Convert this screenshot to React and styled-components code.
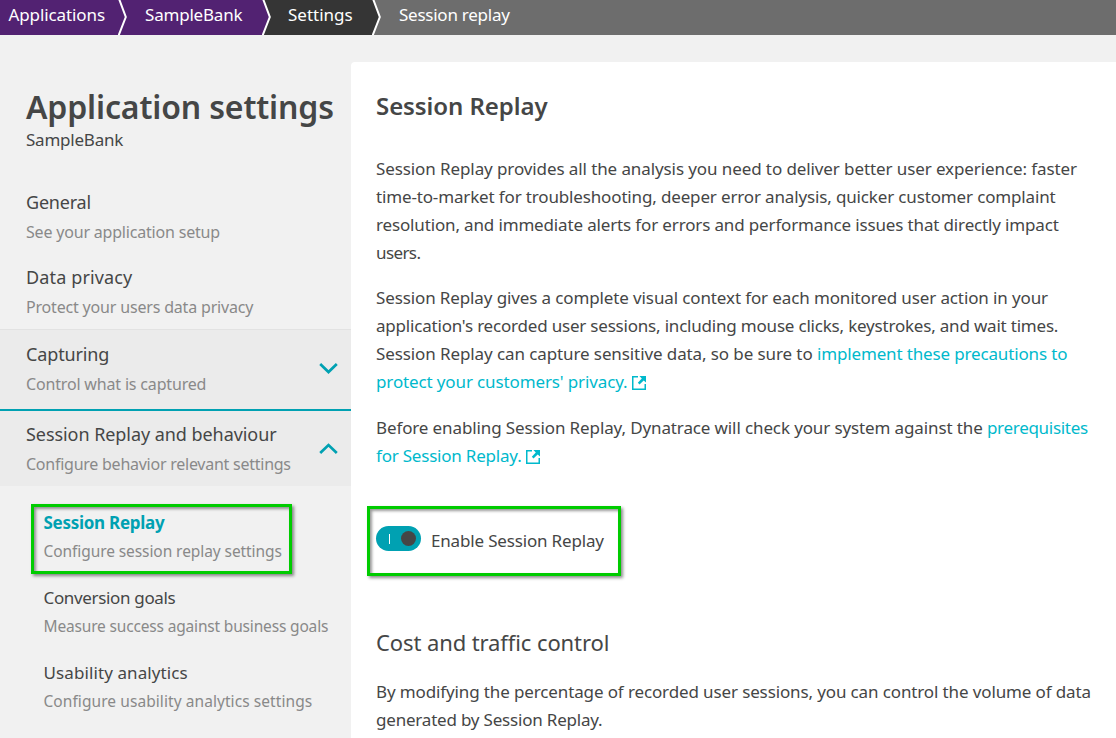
import React from "react";
import styled, { createGlobalStyle } from "styled-components";

const Global = createGlobalStyle`
  *, *::before, *::after { box-sizing: border-box; }
  body { margin: 0; background: #f1f1f1; color: #454646; font: 17px/28px "Noto Sans", sans-serif; overflow: hidden; }
  h1, h2, h3, p { margin: 0; }
`;
const Page = styled.div`height: 738px; display: flex; flex-direction: column; overflow: hidden;`;
const Breadcrumbs = styled.nav`height: 35px; display: flex; flex: none; background: #6d6d6d;`;
const Crumb = styled.span`
  width: ${p => p.$w}px; flex: none; padding-left: ${p => p.$pad}px; color: #fff; background: ${p => p.$bg};
  line-height: 30px; letter-spacing: ${p => p.$track}px; white-space: nowrap;
`;
const Arrow = styled.svg`flex: none; width: 12px; height: 35px; display: block;`;
const Body = styled.div`display: flex; flex: 1; min-height: 0;`;
const Sidebar = styled.aside`width: 351px; flex: none; padding-top: 52px;`;
const Title = styled.h1`padding-left: 26px; font-size: 32px; line-height: 40px; font-weight: 600; letter-spacing: ${p => p.$track}px; white-space: nowrap;`;
const Sub = styled.div`padding-left: 26px; line-height: 26px; letter-spacing: ${p => p.$track}px;`;
const Nav = styled.nav`padding-top: 35px;`;
const Item = styled.div`
  height: ${p => p.$h || 75}px; padding: ${p => p.$top || 0}px 0 0 26px; position: relative;
  background: ${p => p.$open ? "#ebebeb" : "transparent"}; border-top: ${p => p.$line || "0"};
`;
const Name = styled.div`font-size: 18px; line-height: 29px; white-space: nowrap; letter-spacing: ${p => p.$track}px;`;
const Hint = styled.div`font-size: 16px; line-height: 30px; color: #898989; white-space: nowrap; letter-spacing: ${p => p.$track}px;`;
const SubItem = styled.div`height: 75px; padding-left: 43.5px;`;
const SubName = styled(Name)`
  font-size: 17px; line-height: 30px;
  font-weight: ${p => p.$active ? 700 : 400}; color: ${p => p.$active ? "#00a1b2" : "#454646"};
`;
const SubHint = styled(Hint)`font-size: 15.5px; margin-top: -2px;`;
const Chevron = styled.svg`position: absolute; right: 13px; top: ${p => p.$y}px; width: 19px; height: 12px;`;
const SubNav = styled.div`padding-top: 22px; position: relative;`;
const Highlight = styled.div`
  position: absolute; left: ${p => p.$x}px; top: ${p => p.$y}px; width: ${p => p.$w}px; height: 70px;
  border: 3px solid #00cc00; box-shadow: 2px 2px 3px rgba(0,0,0,.45), inset 2px 2px 3px rgba(0,0,0,.4);
`;
const Panel = styled.main`flex: 1; margin-top: 27px; padding: 26px 0 0 25px; background: #fff; border-top-left-radius: 4px; min-width: 0;`;
const Heading = styled.h2`font-size: 24px; line-height: 36px; font-weight: 600; letter-spacing: -0.07px;`;
const SubHeading = styled.h3`font-size: 22px; line-height: 32px; font-weight: 400; margin-top: 72px; letter-spacing: -0.1px;`;
const Paragraph = styled.p`margin-top: ${p => p.$mt}px;`;
const Line = styled.span`display: block; height: 28px; white-space: nowrap; letter-spacing: ${p => p.$track}px;`;
const Link = styled.a`color: #00b9cc; letter-spacing: ${p => p.$track}px;`;
const External = styled.svg`width: 14px; height: 14px; margin-left: 5px; vertical-align: -2px;`;
const ToggleRow = styled.div`position: relative; display: flex; align-items: center; margin-top: 54px; height: 30px;`;
const Switch = styled.span`
  width: 45px; height: 25px; border-radius: 13px; background: #00a1b2; display: flex; align-items: center; justify-content: space-between;
  padding: 0 5px 0 13px; margin: -1px 10px 0 0;
  &::before { content: ""; width: 1px; height: 10px; background: #fff; }
  &::after { content: ""; width: 15px; height: 15px; border-radius: 50%; background: #454646; }
`;
const Label = styled.span`letter-spacing: -0.17px; line-height: 30px; margin-top: 4px;`;

const Separator = ({ left, right }) => (
  <Arrow viewBox="0 0 12 35">
    <rect width="12" height="35" fill={right} />
    <path d="M0 0H1.5L7.8 17L0.8 35H0Z" fill={left} />
    <path d="M1.1 -1L7.8 17L0.4 36" fill="none" stroke="#fff" strokeWidth="2" />
  </Arrow>
);
const Chev = ({ up, y }) => (
  <Chevron $y={y} viewBox="0 0 19 12">
    <path d={up ? "M1.2 10L9.5 2L17.8 10" : "M1.2 2L9.5 10L17.8 2"} fill="none" stroke="#00a1b2" strokeWidth="2.7" />
  </Chevron>
);
const ExternalIcon = () => (
  <External viewBox="0 0 14 14">
    <path d="M6 0.75H0.75V13.25H13.25V8" fill="none" stroke="#00b9cc" strokeWidth="1.5" />
    <path d="M7.4 0H14V6.6L11.7 4.4L7.5 8.4L5.8 6.7L9.8 2.5Z" fill="#00b9cc" />
  </External>
);

export default function App() {
  return (
    <Page>
      <Global />
      <Breadcrumbs>
        <Crumb $w={118} $pad={8.5} $bg="#522272" $track={-0.1}>Applications</Crumb>
        <Separator left="#522272" right="#522272" />
        <Crumb $w={132} $pad={15} $bg="#522272" $track={-0.2}>SampleBank</Crumb>
        <Separator left="#522272" right="#353535" />
        <Crumb $w={98} $pad={14} $bg="#353535" $track={0}>Settings</Crumb>
        <Separator left="#353535" right="#6d6d6d" />
        <Crumb $w={732} $pad={15} $bg="#6d6d6d" $track={-0.25}>Session replay</Crumb>
      </Breadcrumbs>
      <Body>
        <Sidebar>
          <Title $track={-0.15}>Application settings</Title>
          <Sub $track={-0.22}>SampleBank</Sub>
          <Nav>
            <Item><Name $track={-0.2}>General</Name><Hint $track={-0.19}>See your application setup</Hint></Item>
            <Item $h={66}><Name $track={0.14}>Data privacy</Name><Hint $track={-0.18}>Protect your users data privacy</Hint></Item>
            <Item $h={80} $top={10} $open $line="1px solid #e2e2e2">
              <Name $track={-0.13}>Capturing</Name><Hint $track={-0.17}>Control what is captured</Hint><Chev y={32} />
            </Item>
            <Item $h={77} $top={9} $open $line="2px solid #00a1b2">
              <Name $track={-0.06}>Session Replay and behaviour</Name><Hint $track={-0.25}>Configure behavior relevant settings</Hint><Chev y={32} up />
            </Item>
          </Nav>
          <SubNav>
            <SubItem><SubName $active $track={-0.28}>Session Replay</SubName><SubHint $track={-0.08}>Configure session replay settings</SubHint></SubItem>
            <SubItem><SubName $track={-0.34}>Conversion goals</SubName><SubHint $track={-0.17}>Measure success against business goals</SubHint></SubItem>
            <SubItem><SubName $track={0.1}>Usability analytics</SubName><SubHint $track={0.07}>Configure usability analytics settings</SubHint></SubItem>
            <Highlight $x={31} $y={18} $w={261} />
          </SubNav>
        </Sidebar>
        <Panel>
          <Heading>Session Replay</Heading>
          <Paragraph $mt={31}>
            <Line $track={-0.097}>Session Replay provides all the analysis you need to deliver better user experience: faster</Line>
            <Line $track={-0.15}>time-to-market for troubleshooting, deeper error analysis, quicker customer complaint</Line>
            <Line $track={-0.15}>resolution, and immediate alerts for errors and performance issues that directly impact</Line>
            <Line $track={-0.6}>users.</Line>
          </Paragraph>
          <Paragraph $mt={17}>
            <Line $track={-0.12}>Session Replay gives a complete visual context for each monitored user action in your</Line>
            <Line $track={-0.2}>application's recorded user sessions, including mouse clicks, keystrokes, and wait times.</Line>
            <Line $track={-0.1}>Session Replay can capture sensitive data, so be sure to <Link $track={-0.15}>implement these precautions to</Link></Line>
            <Line><Link $track={-0.13}>protect your customers' privacy.<ExternalIcon /></Link></Line>
          </Paragraph>
          <Paragraph $mt={18}>
            <Line $track={-0.12}>Before enabling Session Replay, Dynatrace will check your system against the <Link $track={-0.3}>prerequisites</Link></Line>
            <Line><Link $track={-0.21}>for Session Replay.<ExternalIcon /></Link></Line>
          </Paragraph>
          <ToggleRow>
            <Switch /><Label>Enable Session Replay</Label>
            <Highlight $x={-9} $y={-18} $w={254} />
          </ToggleRow>
          <SubHeading>Cost and traffic control</SubHeading>
          <Paragraph $mt={20}>
            <Line $track={-0.125}>By modifying the percentage of recorded user sessions, you can control the volume of data</Line>
            <Line $track={-0.2}>generated by Session Replay.</Line>
          </Paragraph>
        </Panel>
      </Body>
    </Page>
  );
}
